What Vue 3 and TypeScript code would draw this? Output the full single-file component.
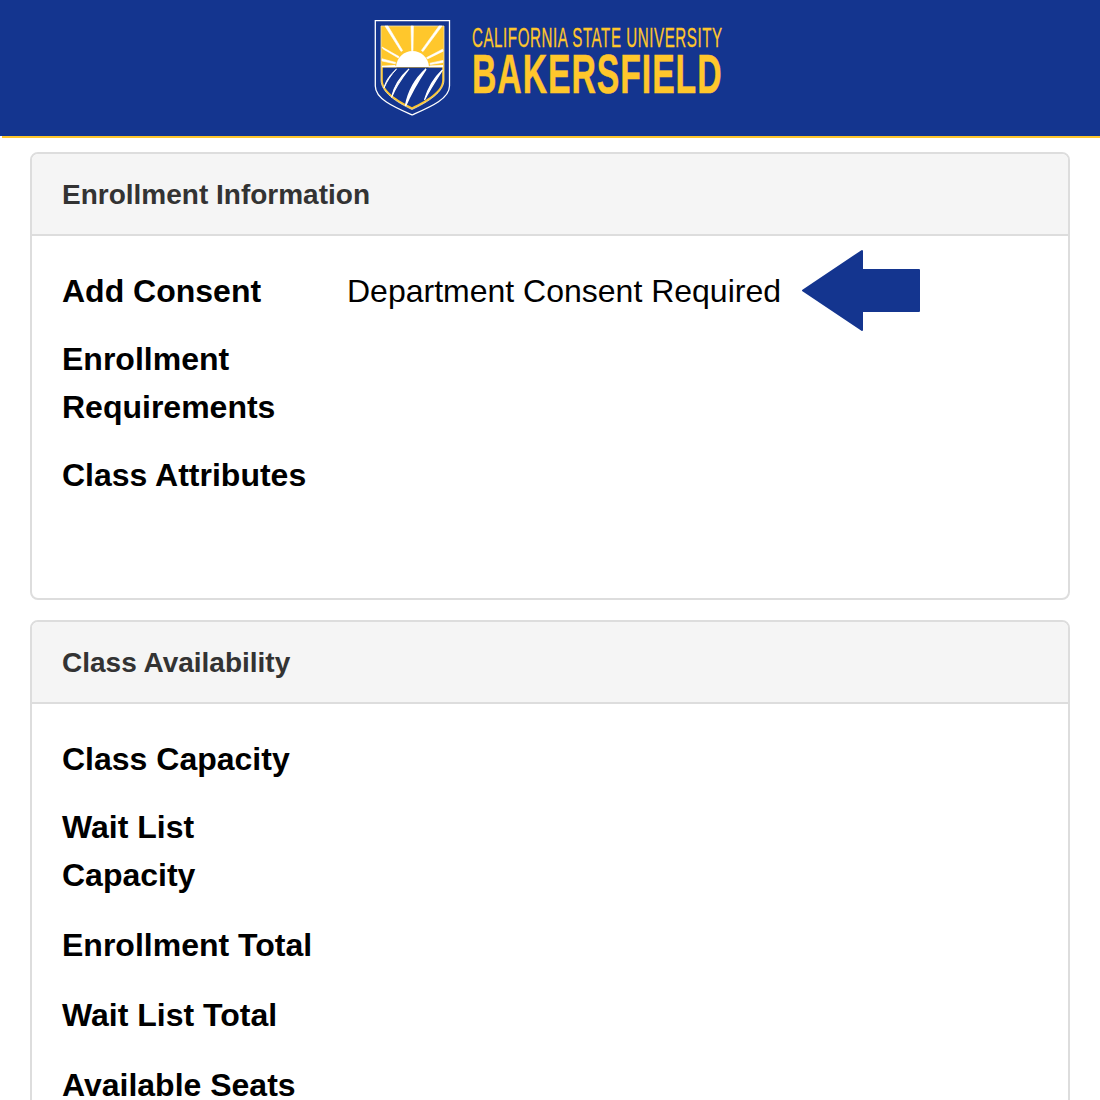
<script setup lang="ts">
interface Row { label: string; value?: string; arrow?: boolean; wide?: boolean }
interface Panel { title: string; rows: Row[]; extra?: boolean }

const panels: Panel[] = [
  {
    title: 'Enrollment Information',
    extra: true,
    rows: [
      { label: 'Add Consent', value: 'Department Consent Required', arrow: true },
      { label: 'Enrollment Requirements' },
      { label: 'Class Attributes' },
    ],
  },
  {
    title: 'Class Availability',
    rows: [
      { label: 'Class Capacity' },
      { label: 'Wait List Capacity', wide: true },
      { label: 'Enrollment Total', wide: true },
      { label: 'Wait List Total', wide: true },
      { label: 'Available Seats' },
    ],
  },
]
</script>

<template>
  <div class="page">
    <header class="masthead">
      <div class="brand">
        <svg class="crest" viewBox="372 18 80 100" aria-hidden="true">
          <path d="M375.3 20.7H449.5V86C449.5 99 430 107 412 115C394 107 375.3 99 375.3 86Z" fill="#14358f" stroke="#fff" stroke-width="1.3" />
          <path d="M381 26H444V80C444 92 428 102 412 109.5C396 102 381 92 381 80Z" fill="#ffc72c" stroke="#f3e2a8" stroke-width="0.8" />
          <path d="M382.8 67.5H442.2V80C442.2 91 427 100 412 107.2C397 100 382.8 91 382.8 80Z" fill="#14358f" />
          <path d="M396 67C396.5 57.5 404 51 412.5 51C421 51 428.5 57.5 429 67Z" fill="#fff" />
          <path d="M382 67.2H396.5L395 65L382 65.8Z" fill="#fff" />
          <path d="M443 67.2H428.5L430 65.4L443 65Z" fill="#fff" />
          <g fill="#fff" stroke="#fff" stroke-width="0.6">
            <path d="M411 26H413.4L413 50.8H411.6Z" />
            <path d="M385 26H388L402.6 50.6L401 51.4Z" />
            <path d="M439 26H442L423 51.6L421.4 50.4Z" />
            <path d="M382 47L383.2 49L398.4 58L399 56.6Z" />
            <path d="M442.6 49.2L443.2 51.2L427.4 59L426.6 57.6Z" />
            <path d="M382 58.8V61L395.2 63.8L395.6 62.4Z" />
            <path d="M443 60.4V62.4L430.2 64.6L430 63.2Z" />
          </g>
          <g fill="#fff" stroke="#fff">
            <path d="M396.5 69C390 75 386 80 384 88C387 81 391 75 396.5 69Z" stroke-width="0.9" />
            <path d="M409 69C400 77 394 86 391.5 97.5C396 86 402 78 409 69Z" stroke-width="1.1" />
            <path d="M426 69C415 79 408 92 405.5 106C411 93 418 81 426 69Z" stroke-width="1.5" />
            <path d="M442.5 70C434 78 428 88 424.5 100C429.5 90 436 80 442.5 70Z" stroke-width="1.2" />
          </g>
        </svg>
        <div class="wordmark">
          <div class="line-top"><span>CALIFORNIA STATE UNIVERSITY</span></div>
          <div class="line-main"><span>BAKERSFIELD</span></div>
        </div>
      </div>
    </header>
    <div class="rule"></div>

    <main class="content">
      <section v-for="p in panels" :key="p.title" class="panel">
        <h2 class="panel-title">{{ p.title }}</h2>
        <div class="panel-body" :class="{ extra: p.extra }">
          <div v-for="r in p.rows" :key="r.label" class="row" :class="{ wide: r.wide }">
            <div class="label">{{ r.label }}</div>
            <div class="value">
              <span v-if="r.value">{{ r.value }}</span>
              <svg v-if="r.arrow" class="arrow" viewBox="0 0 120 83" aria-hidden="true">
                <path
                  d="M1 41.5L60 2V21H117V62H60V81Z"
                  fill="#14358f"
                  stroke="#14358f"
                  stroke-width="2"
                  stroke-linejoin="round"
                />
              </svg>
            </div>
          </div>
        </div>
      </section>
    </main>
  </div>
</template>

<style scoped>
.page {
  height: 1100px;
  overflow: hidden;
  background: #fff;
  font-family: "Liberation Sans", Arial, sans-serif;
  color: #000;
}
.masthead {
  height: 136px;
  background: #14358f;
  display: flex;
  justify-content: center;
}
.brand {
  display: flex;
  gap: 20px;
  padding-top: 18px;
  height: 100px;
}
.crest {
  width: 80px;
  height: 100px;
  display: block;
}
.wordmark {
  width: 256px;
  color: #ffc72c;
}
.line-top,
.line-main {
  white-space: nowrap;
}
.line-top span,
.line-main span {
  display: inline-block;
  transform-origin: left center;
}
.line-top {
  font-size: 27px;
  line-height: 26px;
  margin-top: 7px;
  letter-spacing: 1px;
}
.line-top span {
  transform: scaleX(0.56);
  -webkit-text-stroke: 0.3px #ffc72c;
}
.line-main {
  font-size: 56px;
  line-height: 50px;
  font-weight: 700;
  margin-top: -2px;
  letter-spacing: 1.5px;
}
.line-main span {
  transform: scaleX(0.604);
  -webkit-text-stroke: 0.5px #ffc72c;
}
.rule {
  height: 2px;
  margin-left: 2px;
  background: #ffc72c;
}
.content {
  padding: 14px 30px 0;
}
.panel {
  border: 2px solid #ddd;
  border-radius: 8px;
  margin-bottom: 20px;
}
.panel-title {
  margin: 0;
  height: 79px;
  padding: 1px 30px 0;
  display: flex;
  align-items: center;
  background: #f5f5f5;
  border-bottom: 2px solid #ddd;
  border-radius: 6px 6px 0 0;
  font-size: 28px;
  font-weight: 700;
  color: #333;
  box-sizing: content-box;
}
.panel-body {
  padding: 31px 30px 40px;
}
.panel-body.extra {
  padding-bottom: 99px;
}
.row {
  display: grid;
  grid-template-columns: 255px 1fr;
  column-gap: 30px;
  font-size: 32px;
  line-height: 48px;
  margin-bottom: 20px;
}
.row.wide {
  margin-bottom: 22px;
}
.row:last-child {
  margin-bottom: 0;
}
.label {
  font-weight: 700;
}
.value {
  position: relative;
}
.arrow {
  position: absolute;
  left: 455px;
  top: -18px;
  width: 120px;
  height: 83px;
}
</style>

<style>
body {
  margin: 0;
}
</style>
